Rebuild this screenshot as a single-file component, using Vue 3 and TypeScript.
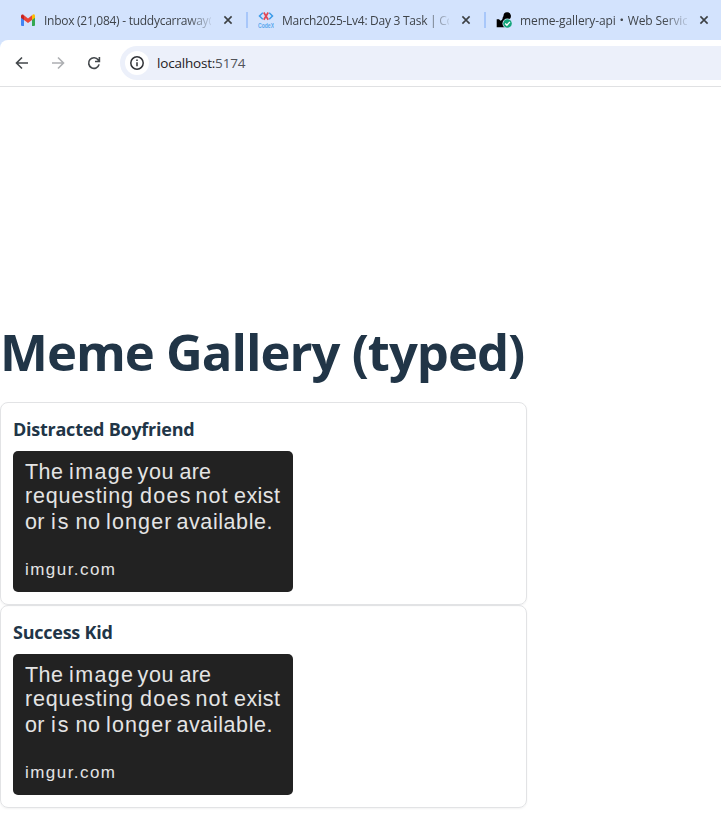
<script setup lang="ts">
interface Tab {
  id: 'mail' | 'codex' | 'api'
  title: string
}
interface Meme {
  id: number
  title: string
}
interface Word {
  text: string
  x: number
  y: number
  length: number
}

const tabs: Tab[] = [
  { id: 'mail', title: 'Inbox (21,084) - tuddycarraway@' },
  { id: 'codex', title: 'March2025-Lv4: Day 3 Task | Co' },
  { id: 'api', title: 'meme-gallery-api・Web Service' },
]

const memes: Meme[] = [
  { id: 1, title: 'Distracted Boyfriend' },
  { id: 2, title: 'Success Kid' },
]

const words: Word[] = [
  { text: 'The', x: 12, y: 28, length: 38 },
  { text: 'image', x: 56, y: 28, length: 64 },
  { text: 'you', x: 124.5, y: 28, length: 36 },
  { text: 'are', x: 166.5, y: 28, length: 31.5 },
  { text: 'requesting', x: 12, y: 52, length: 108 },
  { text: 'does', x: 127, y: 52, length: 50.5 },
  { text: 'not', x: 182.5, y: 52, length: 32 },
  { text: 'exist', x: 221, y: 52, length: 46 },
  { text: 'or', x: 12, y: 78, length: 19.5 },
  { text: 'is', x: 38, y: 78, length: 17.5 },
  { text: 'no', x: 62.5, y: 78, length: 24.5 },
  { text: 'longer', x: 93, y: 78, length: 65.5 },
  { text: 'available.', x: 163.5, y: 78, length: 96 },
]
</script>

<template>
  <div class="window">
    <header class="browser">
      <div class="tabs">
        <div v-for="tab in tabs" :key="tab.id" class="tab" :class="tab.id">
          <svg v-if="tab.id === 'mail'" class="favicon" viewBox="0 0 16 16">
            <path d="M1 4.500V13a1 1 0 0 0 1 1h2V7z" fill="#4285f4" />
            <path d="M15 4.500V13a1 1 0 0 1-1 1h-2V7z" fill="#34a853" />
            <path d="M12 3.800V8l3-2.300V4c0-1.700-1.500-2.200-2.500-1.200z" fill="#fbbc04" />
            <path d="M1 5.700 4 8V3.800L3.500 2.800C2.500 2 1 2.500 1 4z" fill="#c5221f" />
            <path d="M4 8V3.300l4 3.100 4-3.100V8l-4 3.100z" fill="#ea4335" />
          </svg>
          <svg v-else-if="tab.id === 'codex'" class="favicon" viewBox="0 0 16 16">
            <path d="M4.800.8 1.500 4 4.800 7.300M11.200.8 14.500 4 11.200 7.300" fill="none" stroke="#3c9be8" stroke-width="1.500" />
            <path d="M5.800.5 10.200 7.800M10.200.5 5.800 7.800" stroke="#e04855" stroke-width="1.700" />
            <text x="0" y="15.600" textLength="16" lengthAdjust="spacingAndGlyphs" class="logo-text">CodeX</text>
          </svg>
          <svg v-else class="favicon" viewBox="0 0 16 16">
            <path d="M.7 15.300V7.200H3l1.500 1.500C6 8.500 6.700 7 6.700 5.500L7.500 4A3.700 3.700 0 1 1 12 7.500L10 9v6.300z" fill="#000" />
            <circle cx="11.500" cy="11.500" r="5" fill="#d3e3fd" />
            <circle cx="11.500" cy="11.500" r="4.300" fill="#14a67b" />
            <path d="m9.200 11.600 1.700 1.700 3-3.400" fill="none" stroke="#fff" stroke-width="1.400" />
          </svg>
          <span class="tab-title">{{ tab.title }}</span>
          <svg class="close" viewBox="0 0 10 10"><path d="m1.400 1.400 7.200 7.200m0-7.200-7.200 7.200" /></svg>
        </div>
      </div>
      <div class="toolbar">
        <svg class="nav" viewBox="0 0 16 16"><path d="M14 8H2.800M8 2.500 2.500 8 8 13.500" /></svg>
        <svg class="nav disabled" viewBox="0 0 16 16"><path d="M2 8h11.200M8 2.500 13.500 8 8 13.500" /></svg>
        <svg class="nav" viewBox="0 0 16 16"><path d="M13.100 9.400A5.300 5.300 0 1 1 12.300 5l1 1.200M13.400 2v4.500H9" /></svg>
        <div class="address">
          <span class="info">
            <svg viewBox="0 0 16 16">
              <circle cx="8" cy="8" r="6.200" />
              <path d="M8 7.200v4M8 4.600v1.500" />
            </svg>
          </span>
          <span class="url">localhost:<span class="port">5174</span></span>
        </div>
      </div>
    </header>

    <main class="page">
      <div class="gallery">
        <h1>Meme Gallery (typed)</h1>
        <article v-for="meme in memes" :key="meme.id" class="card">
          <h3>{{ meme.title }}</h3>
          <svg class="picture" viewBox="0 0 280 141">
            <text
              v-for="word in words"
              :key="word.text"
              :x="word.x"
              :y="word.y"
              :textLength="word.length"
            >{{ word.text }}</text>
            <text x="12" y="123.500" textLength="90" class="source">imgur.com</text>
          </svg>
        </article>
      </div>
    </main>
  </div>
</template>

<style>
body {
  margin: 0;
  background: #fff;
}
</style>

<style scoped>
.window {
  height: 833px;
  overflow: hidden;
  display: flex;
  flex-direction: column;
  font-family: "Open Sans", "Noto Sans", "Noto Sans CJK JP", sans-serif;
}
.browser {
  height: 87px;
  flex: none;
  box-sizing: border-box;
  background: #d3e3fd;
  border-bottom: 1px solid #e0e1e3;
}
.tabs {
  height: 40px;
  display: flex;
}
.tab {
  width: 238px;
  flex: none;
  box-sizing: border-box;
  display: flex;
  align-items: center;
  padding-left: 10px;
}
.tab.mail {
  width: 248px;
  padding-left: 20px;
}
.favicon {
  width: 16px;
  height: 16px;
  flex: none;
  margin-right: 8px;
}
.logo-text {
  font: bold 7px "Liberation Sans", sans-serif;
  fill: #5aa8ee;
}
.tab-title {
  width: 167px;
  flex: none;
  overflow: hidden;
  white-space: nowrap;
  padding-top: 2px;
  font-size: 12px;
  letter-spacing: -0.27px;
  line-height: 18px;
  color: #3f444a;
  mask-image: linear-gradient(to right, #000 143px, transparent 171px);
}
.api .tab-title {
  letter-spacing: -0.1px;
}
.close {
  width: 10px;
  height: 10px;
  margin-left: 12px;
  fill: none;
  stroke: #3c4043;
  stroke-width: 1.6;
}
.tab + .tab::before {
  content: "";
  width: 2px;
  height: 16px;
  margin: 0 10px 0 -12px;
  background: #a8c7fa;
}
.toolbar {
  height: 46px;
  box-sizing: border-box;
  display: flex;
  align-items: center;
  gap: 20px;
  padding-left: 14px;
  background: #fff;
  border-top-left-radius: 8px;
}
.nav {
  width: 16px;
  height: 16px;
  flex: none;
  fill: none;
  stroke: #43474b;
  stroke-width: 1.6;
}
.nav.disabled {
  stroke: #adafb2;
}
.address {
  flex: 1;
  height: 34px;
  margin-left: -2px;
  padding-left: 5px;
  box-sizing: border-box;
  display: flex;
  align-items: center;
  gap: 8px;
  border-radius: 17px 0 0 17px;
  background: #ecf0fa;
}
.info {
  width: 24px;
  height: 24px;
  border-radius: 50%;
  display: grid;
  place-items: center;
  background: #fff;
}
.info svg {
  width: 16px;
  height: 16px;
  fill: none;
  stroke: #303236;
  stroke-width: 1.5;
}
.url {
  font-size: 13.5px;
  letter-spacing: -0.2px;
  color: #1f2023;
}
.port {
  color: #505359;
}
.page {
  flex: 1;
  display: flex;
  padding-top: 230px;
}
.gallery {
  width: 527px;
  color: #213547;
}
h1 {
  height: 70px;
  margin: 0 0 15px;
  font-size: 50.8px;
  line-height: 70px;
  font-weight: 700;
  letter-spacing: -1px;
  white-space: nowrap;
}
.card {
  height: 203px;
  box-sizing: border-box;
  padding: 12px;
  border: 1px solid #e2e3e5;
  border-radius: 8px;
  box-shadow: 0 1px 2px rgba(0, 0, 0, 0.05);
}
h3 {
  margin: 0 0 8px;
  font-size: 18px;
  line-height: 28px;
  font-weight: 700;
  letter-spacing: -0.25px;
}
.picture {
  display: block;
  width: 280px;
  height: 141px;
  border-radius: 5px;
  background: #222;
  font-family: "Liberation Sans", sans-serif;
  font-size: 21.5px;
  fill: #e4e4e4;
}
.source {
  font-size: 17px;
}
</style>
